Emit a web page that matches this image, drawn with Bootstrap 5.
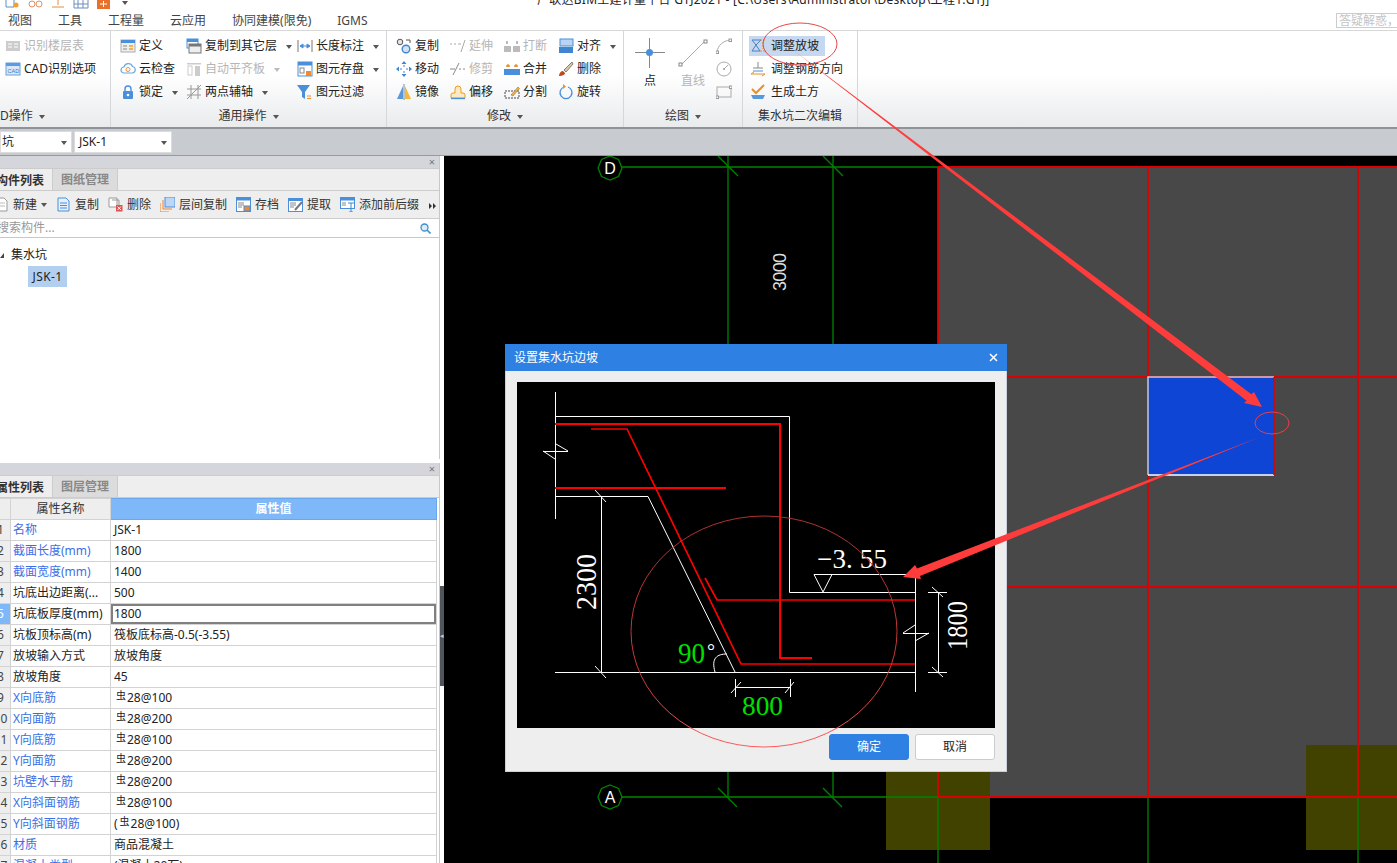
<!DOCTYPE html>
<html lang="zh-CN">
<head>
<meta charset="utf-8">
<title>广联达BIM土建计量平台 GTJ2021</title>
<link href="https://cdn.jsdelivr.net/npm/bootstrap@5.3.0/dist/css/bootstrap.min.css" rel="stylesheet">
<style>
html,body{height:863px;overflow:hidden;background:#fff}
body{font:12px/1.2 "Noto Sans","Noto Sans CJK SC",sans-serif;color:#222;position:relative;width:1397px}
svg{display:block;flex:none}
.qat{height:9px;overflow:hidden}
.qat-icons{width:537px;gap:9px;padding-left:5px}
.ttl{margin-top:-9px;line-height:17px;color:#222;white-space:nowrap;letter-spacing:.26px}
.tabrow{height:21px;gap:26px;padding-left:8px;padding-top:4px;color:#444}
.ask{width:61px;height:15px;border:1px solid #ccc;border-right:0;color:#c4c4c4;overflow:hidden;white-space:nowrap;line-height:13px;padding-left:2px;margin-left:auto;margin-top:-2px}
.rib{height:99px;border-top:1px solid #d8d8d8;border-bottom:2px solid #8f9296;background:linear-gradient(#fff 0,#fff 45%,#e9ebed 100%)}
.grp{height:100%;position:relative;padding-top:4px;border-right:1px solid #d5d8db;flex:none}
.grp .lbl{position:absolute;left:0;right:0;top:75px;height:20px;line-height:20px;text-align:center;color:#333;white-space:nowrap}
.grp .lbl .car{margin-left:6px}
.rcol{flex:none}
.itm{height:23px;white-space:nowrap;gap:3px}
.itm .ico{width:16px;height:16px;margin-top:-2px}
.off{color:#b5b5b5}
.car{display:inline-block;width:0;height:0;border:3px solid transparent;border-top:4px solid #555;border-bottom:0;margin-left:6px;vertical-align:middle;flex:none}
.off .car{border-top-color:#bbb}
.hot{background:#c5d8f0;margin:1px 0 2px -1px;height:20px;padding-left:1px;width:76px}
.bigb{width:30px;gap:4px}
.strip{height:27px;background:#c8cbd0;border-bottom:1px solid #999;padding-top:2px;gap:2px}
.combo{height:22px;background:#fff;border:1px solid #dcdcdc;padding:1px 4px 0 1px;color:#222}
.left{width:440px;flex:none;overflow:hidden}
.pnl{border-right:1px solid #c8c8c8;overflow:hidden}
.p-h{height:12px;background:#d5d6db;color:#777;text-align:right;padding-right:4px;line-height:12px;font-size:11px}
.p-t{height:23px;background:#eee;border-top:1px solid #ccc;border-bottom:1px solid #ccc}
.tab-a{width:57px;margin-left:-4px;padding-top:1px;font-weight:700;color:#333;line-height:21px;border-right:1px solid #ccc;white-space:nowrap;flex:none}
.tab-b{width:65px;background:#dcdcdc;color:#888;font-weight:700;text-align:center;padding-top:1px;line-height:20px;border-right:1px solid #ccc;flex:none}
.p-b{height:28px;background:#eee;border-bottom:1px solid #ccc;gap:9px;color:#333;white-space:nowrap;margin-left:-6px;padding-top:2px}
.p-b .tbi{gap:4px}
.p-b .ico{width:15px;height:15px;margin-top:-1px}
.p-s{height:19px;background:#fff;border-bottom:1px solid #c8c8c8;color:#999;padding:1px 8px 0 0;overflow:hidden;white-space:nowrap}
.p-s span{margin-left:-3px}
.tree{height:221px;background:#fff;color:#222;position:relative}
.t1{padding:6px 0 0 0;height:28px;gap:7px}
.tri{width:0;height:0;border-left:4px solid transparent;border-bottom:5px solid #444;flex:none}
.sel{margin-left:28px;width:39px;height:21px;line-height:21px;background:#b3cff0;text-align:center;letter-spacing:.4px}
.wgap{height:4px;background:#fff}
.tbl-wrap{width:437px;overflow:hidden;height:366px;background:#fff}
.table.ptb{table-layout:fixed;width:447px;margin:0 0 0 -10px;border-color:#d3d3d3;color:#222;font-size:12px}
.table.ptb>*>tr{height:21px}
.table.ptb>*>tr>*{padding:0 3px;height:21px;line-height:20px;white-space:nowrap;overflow:hidden;border:1px solid #d3d3d3;box-shadow:none;vertical-align:middle;background:#fff;font-weight:400}
.table.ptb>*>tr>td:nth-child(2){padding-left:2px}
.table.ptb>*>tr>.num{background:#eee;padding:0;text-align:center;color:#444}
.table.ptb>*>tr>.numon{background:#7fb8f8;color:#fff}
.table.ptb>thead>tr>th{background:#eee;text-align:center;color:#333}
.table.ptb>thead>tr>.hv{background:#7fb8f8;color:#fff;font-weight:700;border-color:#6aa8ee}
.table.ptb>*>tr>.blu{color:#3b6fe6}
.table.ptb>*>tr>.edit{box-shadow:inset 0 0 0 2px #808080}
.gj{font-size:10px;position:relative;top:-3px;margin:0 1px 0 2px}
.split{width:4px;flex:none;background:#fff;position:relative}
.grip{width:4px;height:100px;margin-top:430px;background:#50555b;color:#ccc;font-size:7px;line-height:100px;overflow:hidden;text-align:center}
.cv{flex:1;background:#000;height:708px;overflow:hidden}
.dlg{position:absolute;left:505px;top:344px;width:502px;height:428px;background:#eee;border:1px solid #c9d0dc;border-top:0;z-index:5}
.dlg-h{height:27px;margin:0 -1px;background:#2e80e2;color:#fff;padding:0 9px;line-height:27px}
.dlg-b{padding:11px 11px 0}
.dlg-f{padding:6px 0 0;gap:6px}
.btn.dbtn{width:80px;height:26px;padding:0;font-size:12px;line-height:24px;border-radius:3px}
.btn.ok{background:#2e80e2;border-color:#2e80e2;color:#fff}
.btn.no{background:#fff;border-color:#ccc;color:#222}
.over{position:absolute;left:0;top:0;z-index:9;pointer-events:none}
.cad{font-family:"Liberation Serif",serif}
</style>
</head>
<body>

<div class="qat d-flex">
  <div class="qat-icons d-flex align-items-end" style="gap:8px">
    <svg width="15" height="9" viewBox="0 0 15 9"><path d="M1 0v7h8M9 0v7" fill="none" stroke="#5b8fd0"/><circle cx="11" cy="5" r="2.500" fill="#f0a030"/></svg>
    <svg width="15" height="9" viewBox="0 0 15 9"><circle cx="4" cy="4" r="3" fill="none" stroke="#e09060"/><circle cx="11" cy="4" r="3" fill="none" stroke="#e09060"/></svg>
    <svg width="14" height="9" viewBox="0 0 14 9"><path d="M1 7h12M7 0v5" stroke="#e09040" fill="none"/></svg>
    <svg width="16" height="9" viewBox="0 0 16 9"><path d="M1 0v8h14V0M5 0v8M10 0v8M1 4h14" stroke="#6a8fc0" fill="none"/></svg>
    <svg width="13" height="9" viewBox="0 0 13 9"><rect width="13" height="9" fill="#e8702a"/><path d="M3 4h7M6.500 1v6" stroke="#fff"/></svg>
    <i class="car mb-1" style="margin-left:4px"></i>
  </div>
  <div class="ttl">广联达BIM土建计量平台 GTJ2021 - [C:\Users\Administrator\Desktop\工程1.GTJ]</div>
</div>

<div class="tabrow d-flex align-items-center">
  <span>视图</span><span>工具</span><span>工程量</span><span>云应用</span><span>协同建模(限免)</span><span>IGMS</span>
  <div class="ask">答疑解惑，搜</div>
</div>

<div class="rib d-flex">
  <!-- CAD操作 -->
  <div class="grp" style="width:111px;padding-left:5px">
    <div class="itm d-flex align-items-center off">
      <svg class="ico" viewBox="0 0 16 16"><rect x="1" y="3" width="14" height="10" fill="#ccc"/><path d="M3 6h4M3 9h4M9 6h4M9 9h4" stroke="#fff"/></svg><span>识别楼层表</span>
    </div>
    <div class="itm d-flex align-items-center">
      <svg class="ico" viewBox="0 0 16 16"><rect x="1" y="2" width="14" height="12" fill="#d8e8f8" stroke="#6aa0d8"/><rect x="1" y="2" width="14" height="3" fill="#5a9ae0"/><text x="2.5" y="12" font-size="5.500" fill="#4078b8" font-family="Liberation Sans">CAD</text></svg><span>CAD识别选项</span>
    </div>
    <div class="lbl text-start">D操作<i class="car"></i></div>
  </div>
  <!-- 通用操作 -->
  <div class="grp d-flex" style="width:276px;padding-left:9px">
    <div class="rcol" style="width:66px">
      <div class="itm d-flex align-items-center"><svg class="ico" viewBox="0 0 16 16"><rect x="1" y="2" width="14" height="12" fill="#eee" stroke="#aaa"/><rect x="1" y="2" width="14" height="3" fill="#4a8fdc"/><path d="M3 8h4M3 11h4" stroke="#888"/><path d="M9 8h4M9 11h4" stroke="#f0a030" stroke-width="1.500"/></svg><span>定义</span></div>
      <div class="itm d-flex align-items-center"><svg class="ico" viewBox="0 0 16 16"><path d="M4 12a3 3 0 0 1 0-6 4.500 4.500 0 0 1 8.500-.5 3.300 3.300 0 0 1 0 6.500z" fill="none" stroke="#6aa8e0" stroke-width="1.200"/><circle cx="8" cy="8.500" r="2" fill="none" stroke="#f09040"/></svg><span>云检查</span></div>
      <div class="itm d-flex align-items-center"><svg class="ico" viewBox="0 0 16 16"><path d="M5 7V5a3 3 0 0 1 6 0v2" fill="none" stroke="#4a8fdc" stroke-width="1.400"/><rect x="3" y="7" width="10" height="8" rx="1" fill="#4a8fdc"/><circle cx="8" cy="11" r="1.300" fill="#fff"/></svg><span>锁定</span><i class="car"></i></div>
    </div>
    <div class="rcol" style="width:111px">
      <div class="itm d-flex align-items-center"><svg class="ico" viewBox="0 0 16 16"><rect x="1" y="1" width="11" height="9" fill="#fff" stroke="#4a8fdc"/><rect x="1" y="1" width="11" height="3" fill="#4a8fdc"/><rect x="3" y="6" width="12" height="9" fill="#eee" stroke="#777"/><rect x="3" y="6" width="12" height="2.500" fill="#777"/></svg><span>复制到其它层</span><i class="car"></i></div>
      <div class="itm d-flex align-items-center off"><svg class="ico" viewBox="0 0 16 16"><rect x="1" y="2" width="14" height="1.500" fill="#ccc"/><rect x="2" y="5" width="4" height="9" fill="none" stroke="#ccc"/><rect x="9" y="5" width="5" height="10" fill="#ccc"/></svg><span>自动平齐板</span><i class="car"></i></div>
      <div class="itm d-flex align-items-center"><svg class="ico" viewBox="0 0 16 16"><path d="M5 1v14M12 1v14M1 5h14M1 11h14" stroke="#999" fill="none"/><path d="M1 15 15 1" stroke="#e8803a"/></svg><span>两点辅轴</span><i class="car"></i></div>
    </div>
    <div class="rcol">
      <div class="itm d-flex align-items-center"><svg class="ico" viewBox="0 0 16 16"><path d="M1 2v12M15 2v12" stroke="#777"/><path d="M3 8h10M3 8l3-2v4zM13 8l-3-2v4z" stroke="#4a8fdc" fill="#4a8fdc"/></svg><span>长度标注</span><i class="car"></i></div>
      <div class="itm d-flex align-items-center"><svg class="ico" viewBox="0 0 16 16"><rect x="1" y="1" width="14" height="14" fill="#fff" stroke="#4a8fdc"/><rect x="1" y="1" width="14" height="3.500" fill="#4a8fdc"/><rect x="3" y="7" width="4" height="5" fill="none" stroke="#888"/><rect x="9" y="10" width="5" height="5" fill="#f08a30"/></svg><span>图元存盘</span><i class="car"></i></div>
      <div class="itm d-flex align-items-center"><svg class="ico" viewBox="0 0 16 16"><path d="M0 1h13L8 8v7L5 13V8z" fill="#4a8fdc"/><path d="M10 12h4M10 14.500h4" stroke="#f08a30"/></svg><span>图元过滤</span></div>
    </div>
    <div class="lbl">通用操作<i class="car"></i></div>
  </div>
  <!-- 修改 -->
  <div class="grp d-flex" style="width:237px;padding-left:9px">
    <div class="rcol" style="width:54px">
      <div class="itm d-flex align-items-center"><svg class="ico" viewBox="0 0 16 16"><circle cx="4" cy="4" r="2.800" fill="#e4e4e4" stroke="#555"/><circle cx="10" cy="11" r="3.800" fill="#cfe2f6" stroke="#3f85d0" stroke-width="1.400"/><path d="M10 2h4v3" fill="none" stroke="#555"/></svg><span>复制</span></div>
      <div class="itm d-flex align-items-center"><svg class="ico" viewBox="0 0 16 16"><path d="M8 0l2.500 3h-5zM8 16l2.500-3h-5zM0 8l3-2.500v5zM16 8l-3-2.500v5z" fill="#3f85d0"/><path d="M4 8h2M10 8h2M8 4v2M8 10v2" stroke="#3f85d0"/></svg><span>移动</span></div>
      <div class="itm d-flex align-items-center"><svg class="ico" viewBox="0 0 16 16"><path d="M7 2v13H1z" fill="#5a98dc"/><path d="M9 2v13h6z" fill="#f6b93b"/><path d="M8 0v16" stroke="#888"/></svg><span>镜像</span></div>
    </div>
    <div class="rcol" style="width:54px">
      <div class="itm d-flex align-items-center off"><svg class="ico" viewBox="0 0 16 16"><path d="M0 6h2M4 6h2M8 6h3" stroke="#aaa"/><path d="M11 14 15 2" stroke="#aaa"/></svg><span>延伸</span></div>
      <div class="itm d-flex align-items-center off"><svg class="ico" viewBox="0 0 16 16"><path d="M0 8h5M9 8h2M13 8h2" stroke="#888"/><path d="M3 14 9 2" stroke="#888"/></svg><span>修剪</span></div>
      <div class="itm d-flex align-items-center"><svg class="ico" viewBox="0 0 16 16"><path d="M1 14v-3a2 2 0 0 1 2-2h2V5a3 3 0 0 1 6 0v4h2a2 2 0 0 1 2 2v3z" fill="#fbe9c4" stroke="#e8a020"/><path d="M1 14.500h14" stroke="#4a8fdc" stroke-width="1.300"/></svg><span>偏移</span></div>
    </div>
    <div class="rcol" style="width:54px">
      <div class="itm d-flex align-items-center off"><svg class="ico" viewBox="0 0 16 16"><rect x="0" y="8" width="7" height="6" fill="#bbb"/><rect x="9" y="8" width="7" height="6" fill="#bbb"/><path d="M3 3v3M13 3v3" stroke="#bbb" stroke-width="2"/></svg><span>打断</span></div>
      <div class="itm d-flex align-items-center"><svg class="ico" viewBox="0 0 16 16"><rect x="0" y="8" width="16" height="6" fill="#4a8fdc"/><path d="M4 3v3M12 3v3M2 5h4M10 5h4" stroke="#e8902a" stroke-width="1.400"/></svg><span>合并</span></div>
      <div class="itm d-flex align-items-center"><svg class="ico" viewBox="0 0 16 16"><path d="M1 7h14v7H1z" fill="none" stroke="#445" stroke-dasharray="2 1"/><path d="M7 11 14 3l1.500 1.500L9 12z" fill="#f0b050" stroke="#8a5a20" stroke-width=".5"/></svg><span>分割</span></div>
    </div>
    <div class="rcol">
      <div class="itm d-flex align-items-center"><svg class="ico" viewBox="0 0 16 16"><rect x="2" y="1" width="13" height="7" fill="#b9d4f2" stroke="#4a8fdc"/><rect x="1" y="9" width="14" height="6" fill="#3f85d0"/></svg><span>对齐</span><i class="car"></i></div>
      <div class="itm d-flex align-items-center"><svg class="ico" viewBox="0 0 16 16"><path d="M14 1 6 9l2 2 7-8z" fill="#d9c9a0" stroke="#555" stroke-width=".7"/><path d="M1 15c0-3 2-5 4-5l2 2c0 2-3 3-6 3z" fill="#c0481c"/></svg><span>删除</span></div>
      <div class="itm d-flex align-items-center"><svg class="ico" viewBox="0 0 16 16"><path d="M10 3a6 6 0 1 1-4 0" fill="none" stroke="#4a8fdc" stroke-width="1.300"/><path d="M5 0v5l3-2.500z" fill="#f08a30"/></svg><span>旋转</span></div>
    </div>
    <div class="lbl">修改<i class="car"></i></div>
  </div>
  <!-- 绘图 -->
  <div class="grp d-flex" style="width:119px;padding-left:11px">
    <div class="bigb d-flex flex-column align-items-center">
      <svg width="30" height="30" viewBox="0 0 30 30" style="margin-top:3px"><path d="M0 14.500h30M14.500 0v30" stroke="#888"/><circle cx="14.500" cy="14.500" r="3.500" fill="#4a8fdc"/></svg>
      <span style="margin-top:2px">点</span>
    </div>
    <div class="bigb d-flex flex-column align-items-center off" style="margin-left:13px">
      <svg width="30" height="30" viewBox="0 0 30 30" style="margin-top:3px"><path d="M3 27 27 3" stroke="#aaa"/><rect x="1" y="25" width="3" height="3" fill="#fff" stroke="#888"/><rect x="26" y="2" width="3" height="3" fill="#fff" stroke="#888"/></svg>
      <span style="margin-top:2px">直线</span>
    </div>
    <div class="rcol off" style="margin-left:8px">
      <div class="itm d-flex align-items-center"><svg class="ico" viewBox="0 0 16 16"><path d="M1 14C2 7 7 3 14 2" fill="none" stroke="#aaa"/><rect x="0" y="13" width="2.500" height="2.500" fill="#fff" stroke="#999"/><rect x="13" y="1" width="2.500" height="2.500" fill="#fff" stroke="#999"/></svg></div>
      <div class="itm d-flex align-items-center"><svg class="ico" viewBox="0 0 16 16"><circle cx="8" cy="8" r="7" fill="none" stroke="#aaa"/><path d="M8 8l4-4" stroke="#aaa"/><circle cx="8" cy="8" r="1" fill="#999"/></svg></div>
      <div class="itm d-flex align-items-center"><svg class="ico" viewBox="0 0 16 16"><rect x="1" y="3" width="14" height="10" fill="none" stroke="#aaa"/><rect x="0" y="12" width="2.500" height="2.500" fill="#fff" stroke="#999"/><rect x="13.500" y="2" width="2.500" height="2.500" fill="#fff" stroke="#999"/></svg></div>
    </div>
    <div class="lbl">绘图<i class="car"></i></div>
  </div>
  <!-- 集水坑二次编辑 -->
  <div class="grp" style="width:115px;padding-left:7px">
    <div class="itm d-flex align-items-center hot" style="gap:5px"><svg class="ico" viewBox="0 0 16 16" style="margin-top:0"><path d="M2 2h9L6 7l4 6H2l4-6z" fill="none" stroke="#4a7fc0"/><path d="M10 2h5M10 13h5M13 4v7" stroke="#e8902a" stroke-dasharray="2 1" fill="none"/></svg><span>调整放坡</span></div>
    <div class="itm d-flex align-items-center" style="gap:5px"><svg class="ico" viewBox="0 0 16 16"><path d="M8 1v6M3 7h10" stroke="#888"/><path d="M1 13h14M1 13l3-2M15 13l-3 2" stroke="#e8902a" fill="none"/><path d="M3 10h10" stroke="#4a8fdc"/></svg><span>调整钢筋方向</span></div>
    <div class="itm d-flex align-items-center" style="gap:5px"><svg class="ico" viewBox="0 0 16 16"><path d="M2 5l4 4 8-8" fill="none" stroke="#e8902a" stroke-width="2"/><path d="M1 11h14l-2 4H3z" fill="#5a98dc"/></svg><span>生成土方</span></div>
    <div class="lbl">集水坑二次编辑</div>
  </div>
</div>

<div class="strip d-flex">
  <div class="combo d-flex align-items-center justify-content-between" style="width:72px"><span>坑</span><i class="car"></i></div>
  <div class="combo d-flex align-items-center justify-content-between" style="width:98px;padding-left:4px"><span>JSK-1</span><i class="car"></i></div>
</div>

<div class="d-flex">
  <div class="left">
    <div class="pnl">
      <div class="p-h">×</div>
      <div class="p-t d-flex"><div class="tab-a">构件列表</div><div class="tab-b">图纸管理</div></div>
      <div class="p-b d-flex align-items-center">
        <div class="tbi d-flex align-items-center"><svg class="ico" viewBox="0 0 15 15"><path d="M2 1h8l3 3v10H2z" fill="#fff" stroke="#999"/><path d="M4 6h7M4 9h7" stroke="#bbb"/></svg><span>新建</span><i class="car" style="margin-left:0"></i></div>
        <div class="tbi d-flex align-items-center"><svg class="ico" viewBox="0 0 15 15"><path d="M2 1h8l3 3v10H2z" fill="#e6f0fb" stroke="#4a8fdc"/><path d="M4 6h7M4 8.500h7M4 11h7" stroke="#4a8fdc"/></svg><span>复制</span></div>
        <div class="tbi d-flex align-items-center"><svg class="ico" viewBox="0 0 15 15"><path d="M1 1h8v9H1z" fill="#fff" stroke="#999"/><path d="M4 3h7v8" fill="none" stroke="#999"/><rect x="8" y="8" width="6.500" height="6.500" fill="#d9534f"/><path d="M9.500 9.500l3.500 3.500M13 9.500 9.500 13" stroke="#fff"/></svg><span>删除</span></div>
        <div class="tbi d-flex align-items-center"><svg class="ico" viewBox="0 0 15 15"><rect x="5" y="0" width="10" height="10" fill="#bcd6f4" stroke="#4a8fdc"/><path d="M3 3v9h9M0 6v9h9" fill="none" stroke="#f0802a"/></svg><span>层间复制</span></div>
        <div class="tbi d-flex align-items-center"><svg class="ico" viewBox="0 0 15 15"><rect x=".5" y=".5" width="14" height="14" fill="#fff" stroke="#4a8fdc"/><rect y="0" width="15" height="3.500" fill="#4a8fdc"/><path d="M2 6h6M2 8h6M2 10h4" stroke="#888"/><rect x="8" y="9" width="6" height="5" fill="#f08a30" stroke="#4a8fdc"/></svg><span>存档</span></div>
        <div class="tbi d-flex align-items-center"><svg class="ico" viewBox="0 0 15 15"><rect x=".5" y="1.500" width="14" height="13" fill="#fff" stroke="#4a8fdc"/><rect y="1" width="15" height="3" fill="#4a8fdc"/><path d="M2 6h6M2 8h6M2 10h4" stroke="#888"/><path d="M7 13 14 5" stroke="#778" stroke-width="2"/></svg><span>提取</span></div>
        <div class="tbi d-flex align-items-center"><svg class="ico" viewBox="0 0 15 15"><rect x=".5" y=".5" width="14" height="11" fill="#fff" stroke="#4a8fdc"/><rect width="15" height="3.500" fill="#4a8fdc"/><path d="M2 6h4M2 8h4" stroke="#888"/><path d="M8 6h6M11 6v9M9 15h4" stroke="#3f85d0" fill="none"/></svg><span>添加前后缀</span></div>
        <svg width="8" height="8" viewBox="0 0 8 8" style="margin-left:1px"><path d="M0 1l3 3-3 3zM4 1l3 3-3 3z" fill="#333"/></svg>
      </div>
      <div class="p-s d-flex align-items-center justify-content-between"><span>搜索构件...</span><svg width="11" height="11" viewBox="0 0 11 11"><circle cx="4.500" cy="4.500" r="3.500" fill="#dcecf8" stroke="#3f8fc8" stroke-width="1.300"/><path d="M7 7l3.500 3.500" stroke="#3f8fc8" stroke-width="1.600"/></svg></div>
      <div class="tree">
        <div class="t1 d-flex align-items-center"><i class="tri"></i><span>集水坑</span></div>
        <div class="sel">JSK-1</div>
      </div>
    </div>
    <div class="wgap"></div>
    <div class="pnl">
      <div class="p-h">×</div>
      <div class="p-t d-flex"><div class="tab-a">属性列表</div><div class="tab-b">图层管理</div></div>
      <div class="tbl-wrap">
        <table class="table table-bordered ptb">
          <colgroup><col style="width:20px"><col style="width:100px"><col></colgroup>
          <thead><tr><th class="num"></th><th>属性名称</th><th class="hv">属性值</th></tr></thead>
          <tbody>
            <tr><td class="num">1</td><td class="blu">名称</td><td>JSK-1</td></tr>
            <tr><td class="num">2</td><td class="blu">截面长度(mm)</td><td>1800</td></tr>
            <tr><td class="num">3</td><td class="blu">截面宽度(mm)</td><td>1400</td></tr>
            <tr><td class="num">4</td><td>坑底出边距离(...</td><td>500</td></tr>
            <tr><td class="num numon">5</td><td>坑底板厚度(mm)</td><td class="edit">1800</td></tr>
            <tr><td class="num">6</td><td>坑板顶标高(m)</td><td>筏板底标高-0.5(-3.55)</td></tr>
            <tr><td class="num">7</td><td>放坡输入方式</td><td>放坡角度</td></tr>
            <tr><td class="num">8</td><td>放坡角度</td><td>45</td></tr>
            <tr><td class="num">9</td><td class="blu">X向底筋</td><td><span class="gj">虫</span>28@100</td></tr>
            <tr><td class="num">10</td><td class="blu">X向面筋</td><td><span class="gj">虫</span>28@200</td></tr>
            <tr><td class="num">11</td><td class="blu">Y向底筋</td><td><span class="gj">虫</span>28@100</td></tr>
            <tr><td class="num">12</td><td class="blu">Y向面筋</td><td><span class="gj">虫</span>28@200</td></tr>
            <tr><td class="num">13</td><td class="blu">坑壁水平筋</td><td><span class="gj">虫</span>28@200</td></tr>
            <tr><td class="num">14</td><td class="blu">X向斜面钢筋</td><td><span class="gj">虫</span>28@100</td></tr>
            <tr><td class="num">15</td><td class="blu">Y向斜面钢筋</td><td>(<span class="gj">虫</span>28@100)</td></tr>
            <tr><td class="num">16</td><td class="blu">材质</td><td>商品混凝土</td></tr>
            <tr><td class="num">17</td><td class="blu">混凝土类型</td><td>(混凝土20石)</td></tr>
          </tbody>
        </table>
      </div>
    </div>
  </div>
  <div class="split"><div class="grip">◂</div></div>
  <div class="cv">
    <svg width="953" height="708" viewBox="444 155 953 708">
      <rect x="938" y="166" width="459" height="630" fill="#484848"/>
      <rect x="886" y="744" width="104" height="105" fill="#414100"/>
      <rect x="1306" y="744" width="91" height="105" fill="#414100"/>
      <g stroke="#008400" stroke-width="1.300" fill="none">
        <path d="M622 166H938M622 796H938"/>
        <path d="M728 155V796M833 155V796"/>
        <path d="M938 796V863M1148 796V863M1358 796V863"/>
        <path d="M718 155 738 175M823 155 843 175"/>
        <path d="M718 787 737 806M823 787 842 806"/>
        <polygon points="610,155 618.500,158.500 622,167 618.500,175.500 610,179 601.500,175.500 598,167 601.500,158.500"/>
        <polygon points="610,784 618.500,787.500 622,796 618.500,804.500 610,808 601.500,804.500 598,796 601.500,787.500"/>
      </g>
      <text x="610" y="173" text-anchor="middle" fill="#fff" font-size="16" font-family="Liberation Sans">D</text>
      <text x="610" y="802" text-anchor="middle" fill="#fff" font-size="16" font-family="Liberation Sans">A</text>
      <text transform="translate(786 290) rotate(-90)" fill="#ddd" font-size="18" font-family="Liberation Sans" textLength="38">3000</text>
      <g stroke="#dc0000" stroke-width="1.800" fill="none">
        <path d="M938 166H1397M938 376H1397M938 586H1397M938 796H1397"/>
        <path d="M938 166V796M1148 166V796M1358 166V796"/>
      </g>
      <rect x="1148" y="376" width="126" height="98" fill="#0e45d4"/>
      <path d="M1274 376H1148V474" fill="none" stroke="#c8ccd4" stroke-width="1.500"/>
      <path d="M1148 474H1274" stroke="#fff" stroke-width="1.500"/>
      <path d="M1274 376V474" stroke="#e00000" stroke-width="1.500"/>
    </svg>
  </div>
</div>

<div class="dlg">
  <div class="dlg-h d-flex align-items-center justify-content-between"><span>设置集水坑边坡</span><svg width="9" height="9" viewBox="0 0 9 9"><path d="M1 1l7 7M8 1 1 8" stroke="#fff" stroke-width="1.500"/></svg></div>
  <div class="dlg-b">
    <svg width="478" height="346" viewBox="517 382 478 346" style="background:#000">
      <g stroke="#fff" stroke-width="1" fill="none">
        <path d="M555.500 392V519"/>
        <path d="M555 416.500H789.500V592.500H915.500"/>
        <path d="M915.500 575V692"/>
        <path d="M814 574.500H915M814 574.500 823 592 832 574.500"/>
        <path d="M555 496.500H648L735 672"/>
        <path d="M555 672.500H915"/>
        <path d="M601.500 496V672M595 490 606 502M595 666 606 678"/>
        <path d="M543 451.500H568M543 451 555 459M556 444 568 451"/>
        <path d="M903 633.500H929M903 633 915 625M915 641 929 633"/>
        <path d="M938.500 592V672M928 592.500H947M928 672.500H947M932 587 943 597M932 667 943 677"/>
        <path d="M735 687.500H790M735.500 679V697M790.500 679V697M731 693 741 682M785 693 794 682"/>
        <path d="M715 672C711 658 717 654 727 654"/>
      </g>
      <g stroke="#ff0000" fill="none">
        <path d="M555 424H780V658H812" stroke-width="2"/>
        <path d="M591 429H627L741 664H915" stroke-width="1.700"/>
        <path d="M555 488H726" stroke-width="2"/>
        <path d="M705 578 717 600H915" stroke-width="1.700"/>
      </g>
      <g class="cad">
        <text transform="translate(596 610) rotate(-90)" fill="#fff" font-size="29" textLength="56" lengthAdjust="spacingAndGlyphs">2300</text>
        <text transform="translate(967 650) rotate(-90)" fill="#fff" font-size="29" textLength="49" lengthAdjust="spacingAndGlyphs">1800</text>
        <text x="817" y="568" fill="#fff" font-size="27" textLength="70">−3. 55</text>
        <text x="678" y="663" fill="#00e000" font-size="29" textLength="27" lengthAdjust="spacingAndGlyphs">90</text>
        <text x="707" y="658" fill="#fff" font-size="20">°</text>
        <text x="742" y="715" fill="#00e000" font-size="28" textLength="41" lengthAdjust="spacingAndGlyphs">800</text>
      </g>
    </svg>
    <div class="dlg-f d-flex justify-content-end">
      <button type="button" class="btn dbtn ok">确定</button>
      <button type="button" class="btn dbtn no">取消</button>
    </div>
  </div>
</div>

<svg class="over" width="1397" height="863" viewBox="0 0 1397 863">
  <defs><linearGradient id="rg" x1="0" y1="0" x2="0" y2="1"><stop offset="0" stop-color="#a83232"/><stop offset=".7" stop-color="#c83a3a"/><stop offset="1" stop-color="#ff5a5a"/></linearGradient></defs>
  <ellipse cx="800" cy="44" rx="37" ry="21" fill="none" stroke="#e8474a"/>
  <ellipse cx="764" cy="631.500" rx="133" ry="115.500" fill="none" stroke="url(#rg)"/>
  <ellipse cx="1272" cy="423" rx="17" ry="11" fill="none" stroke="#e8404a"/>
  <polygon points="793,50 1251.400,394.300 1254,392 1262,407 1244,403 1246.600,400.700" fill="#ff3c3c"/>
  <polygon points="1260,437 917,568.500 915,565 903,577 921,579 920,576" fill="#ff3c3c"/>
</svg>

<script src="https://cdn.jsdelivr.net/npm/bootstrap@5.3.0/dist/js/bootstrap.bundle.min.js"></script>
</body>
</html>
